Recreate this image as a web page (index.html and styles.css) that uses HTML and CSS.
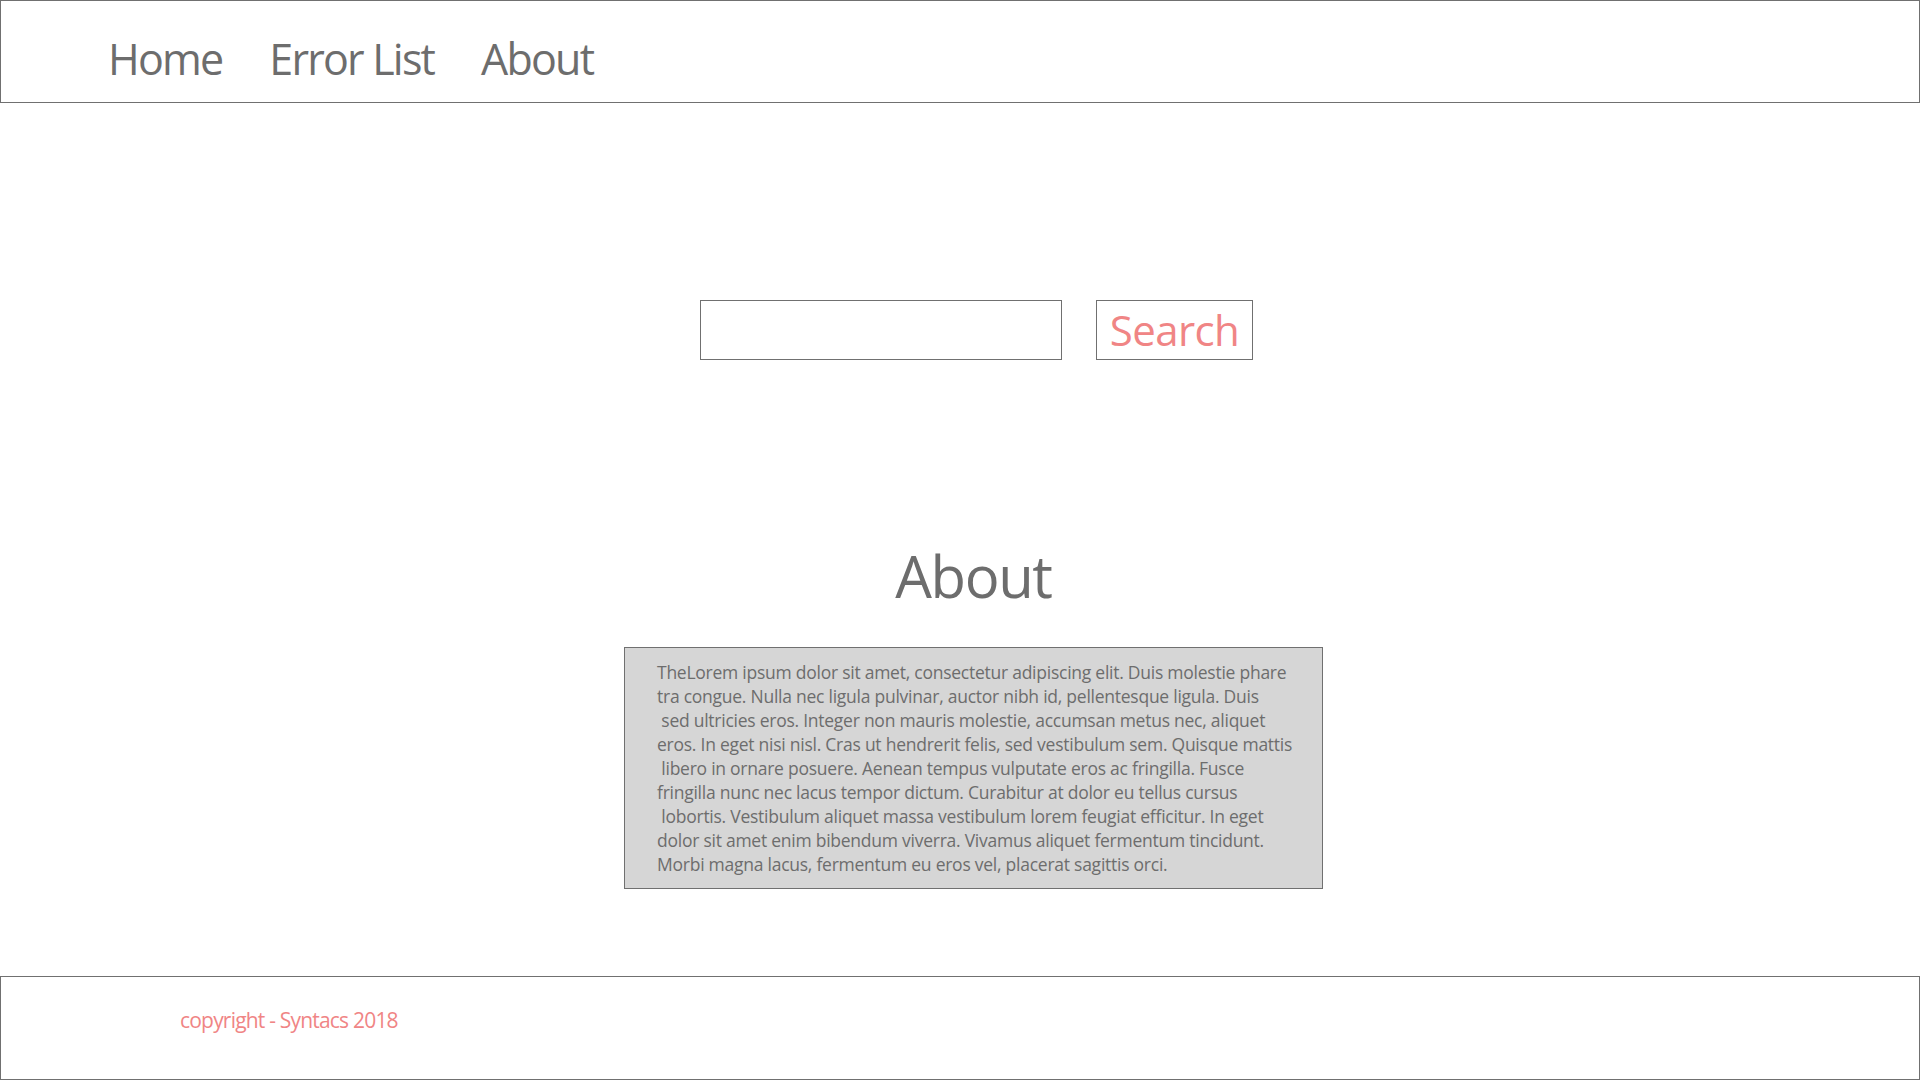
FILE: index.html
```html
<!DOCTYPE html>
<html lang="en">
<head>
<meta charset="utf-8">
<title>Syntacs - About</title>
<link rel="stylesheet" href="styles.css">
</head>
<body>
<header class="topbar">
  <nav class="nav">
    <a class="nav-link" href="#">Home</a>
    <a class="nav-link" href="#">Error List</a>
    <a class="nav-link" href="#">About</a>
  </nav>
</header>
<main class="content">
  <form class="search" onsubmit="return false;">
    <input class="search-input" type="text" aria-label="Search">
    <button class="search-button" type="submit">Search</button>
  </form>
  <h1 class="about-title">About</h1>
  <div class="about-box"><p class="about-text">TheLorem ipsum dolor sit amet, consectetur adipiscing elit. Duis molestie phare
tra congue. Nulla nec ligula pulvinar, auctor nibh id, pellentesque ligula. Duis
 sed ultricies eros. Integer non mauris molestie, accumsan metus nec, aliquet
eros. In eget nisi nisl. Cras ut hendrerit felis, sed vestibulum sem. Quisque mattis
 libero in ornare posuere. Aenean tempus vulputate eros ac fringilla. Fusce
fringilla nunc nec lacus tempor dictum. Curabitur at dolor eu tellus cursus
 lobortis. Vestibulum aliquet massa vestibulum lorem feugiat efficitur. In eget
dolor sit amet enim bibendum viverra. Vivamus aliquet fermentum tincidunt.
Morbi magna lacus, fermentum eu eros vel, placerat sagittis orci.</p></div>
</main>
<footer class="footer">
  <p class="copyright">copyright - Syntacs 2018</p>
</footer>
</body>
</html>
```
FILE: styles.css
```css
* { box-sizing: border-box; }

html, body {
  margin: 0;
  padding: 0;
  height: 100%;
}

body {
  display: flex;
  flex-direction: column;
  min-height: 100vh;
  background: #ffffff;
  color: #6d6d6d;
  font-family: "Open Sans", "Noto Sans", sans-serif;
  font-stretch: normal;
  font-weight: 400;
}

/* Header */
.topbar {
  height: 103px;
  border: 1px solid #707070;
  padding: 36px 0 0 107px;
}

.nav {
  display: flex;
  gap: 47px;
}

.nav-link {
  font-size: 43px;
  line-height: 43px;
  letter-spacing: -1.8px;
  color: #6d6d6d;
  text-decoration: none;
}

/* Main */
.content {
  flex: 1;
  display: flex;
  flex-direction: column;
  align-items: center;
  padding: 197px 0 0 27px;
}

.search {
  display: flex;
  gap: 34px;
  margin: 0 0 0 6px;
}

.search-input {
  width: 362px;
  height: 60px;
  border: 1px solid #707070;
  border-radius: 0;
  background: #ffffff;
  margin: 0;
  padding: 0 10px;
  font-family: inherit;
  font-size: 24px;
  color: #6d6d6d;
  outline: none;
}

.search-button {
  width: 157px;
  height: 60px;
  border: 1px solid #707070;
  border-radius: 0;
  background: #ffffff;
  margin: 0;
  padding: 0;
  font-family: inherit;
  font-stretch: normal;
  font-weight: 400;
  font-size: 42px;
  line-height: 58px;
  letter-spacing: -0.6px;
  color: #f08585;
  cursor: pointer;
}

.about-title {
  margin: 187px 0 0 0;
  font-size: 58px;
  line-height: 58px;
  font-weight: 400;
  letter-spacing: -1.4px;
  color: #6d6d6d;
}

.about-box {
  margin-top: 42px;
  width: 699px;
  height: 242px;
  border: 1px solid #707070;
  background: #d6d6d6;
  padding: 12px 0 12px 32px;
}

.about-text {
  margin: 0;
  white-space: pre;
  font-size: 17.5px;
  line-height: 24px;
  letter-spacing: -0.25px;
  color: #6d6d6d;
}

/* Footer */
.footer {
  height: 104px;
  border: 1px solid #707070;
  padding: 29px 0 0 179px;
}

.copyright {
  margin: 0;
  font-size: 21px;
  line-height: 29px;
  letter-spacing: -0.8px;
  color: #f08585;
}
```
